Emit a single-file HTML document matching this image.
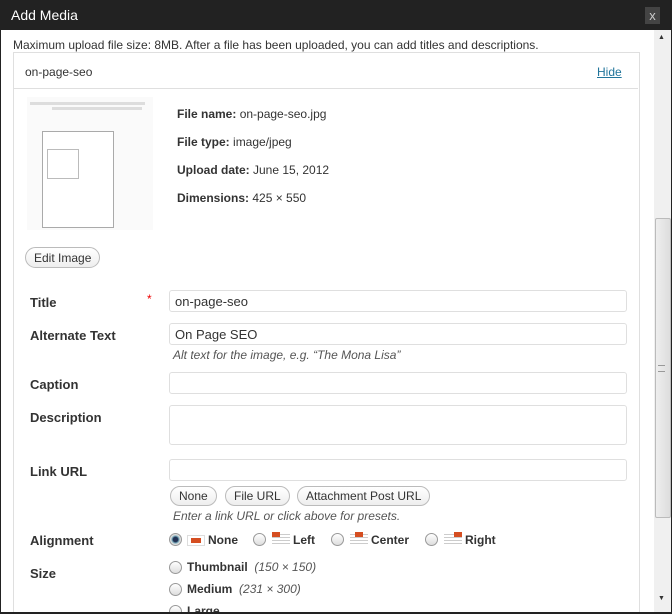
<!DOCTYPE html><html><head><style>
html,body{margin:0;width:672px;height:614px;overflow:hidden}
body{background:#222;font-family:"Liberation Sans",Arial,sans-serif;font-size:12px;color:#333;position:relative}
.a{position:absolute}
#tb{left:0;top:0;width:672px;height:30px;background:#222;color:#fff;font-size:14px}
#main{left:1px;top:30px;width:653px;height:582px;background:#fff;overflow:hidden}
#sb{left:654px;top:30px;width:17px;height:582px;background:#f0f0f0;overflow:hidden}
.lbl{position:absolute;left:29px;font-weight:bold;font-size:13px;color:#333}
.inp{position:absolute;left:168px;width:458px;height:22px;border:1px solid #dfdfdf;border-radius:3px;background:#fff;box-sizing:border-box;font-size:13px;padding:3px 5px;color:#333}
.btn{position:absolute;height:20px;border:1px solid #bbb;border-radius:11px;background:linear-gradient(#fff,#eee);box-sizing:border-box;font-size:12px;padding:2px 8px;color:#333}
.help{position:absolute;left:172px;font-style:italic;color:#555;font-size:12px}
.rad{position:absolute;width:11px;height:11px;border:1px solid #999;border-radius:50%;background:linear-gradient(#fff,#ddd)}
.b{font-weight:bold}
</style></head><body>
<div class="a" id="tb"><span class="a" style="left:11px;top:7px">Add Media</span><span class="a" style="left:645px;top:7px;width:15px;height:17px;background:#444;color:#ccc;text-align:center;font-size:13px;line-height:17px">x</span></div>
<div class="a" id="main">
<div class="a" style="left:12px;top:8px;font-size:12px">Maximum upload file size: 8MB. After a file has been uploaded, you can add titles and descriptions.</div>
<div class="a" style="left:12px;top:22px;width:625px;height:600px;border:1px solid #dfdfdf"></div>
<div class="a" style="left:13px;top:58px;width:624px;height:1px;background:#dfdfdf"></div>
<div class="a" style="left:24px;top:35px;font-size:12px">on-page-seo</div>
<div class="a" style="left:596px;top:35px;color:#21759b;text-decoration:underline">Hide</div>
<div class="a" style="left:26px;top:67px;width:126px;height:133px;background:#fafafa">
<div class="a" style="left:15px;top:34px;width:70px;height:95px;border:1px solid #aaa;background:#fff"></div>
<div class="a" style="left:3px;top:5px;width:115px;height:3px;background:#ddd"></div>
<div class="a" style="left:25px;top:10px;width:90px;height:3px;background:#ddd"></div>
<div class="a" style="left:20px;top:52px;width:30px;height:28px;border:1px solid #bbb"></div>
</div>
<div class="a" style="left:176px;top:70px;line-height:28px;font-size:12px"><span class="b">File name:</span> on-page-seo.jpg<br><span class="b">File type:</span> image/jpeg<br><span class="b">Upload date:</span> June 15, 2012<br><span class="b">Dimensions:</span> 425 × 550</div>
<div class="btn" style="left:24px;top:217px;height:21px;padding:3px 8px">Edit Image</div>
<div class="lbl" style="top:265px">Title</div><div class="a" style="left:146px;top:262px;color:#e00">*</div>
<div class="inp" style="top:260px">on-page-seo</div>
<div class="lbl" style="top:298px">Alternate Text</div>
<div class="inp" style="top:293px">On Page SEO</div>
<div class="help" style="top:318px">Alt text for the image, e.g. “The Mona Lisa”</div>
<div class="lbl" style="top:347px">Caption</div>
<div class="inp" style="top:342px"></div>
<div class="lbl" style="top:380px">Description</div>
<div class="inp" style="top:375px;height:40px"></div>
<div class="lbl" style="top:434px">Link URL</div>
<div class="inp" style="top:429px"></div>
<div class="btn" style="left:169px;top:456px">None</div>
<div class="btn" style="left:224px;top:456px">File URL</div>
<div class="btn" style="left:296px;top:456px">Attachment Post URL</div>
<div class="help" style="top:479px">Enter a link URL or click above for presets.</div>
<div class="lbl" style="top:503px">Alignment</div>
<div class="rad" style="left:168px;top:503px;background:radial-gradient(#235 30%,#7ab 45%,#ddd 60%)"></div>
<div class="a" style="left:186px;top:505px;width:16px;height:9px;border:1px solid #ddd;background:#fff"><div class="a" style="left:3px;top:2px;width:10px;height:5px;background:#d54e21"></div></div>
<div class="a b" style="left:207px;top:503px;font-size:12px">None</div>
<div class="rad" style="left:252px;top:503px"></div>
<div class="a" style="left:271px;top:502px;width:18px;height:12px;background:repeating-linear-gradient(#fff 0 2px,#ccc 2px 3px)"><div class="a" style="left:0;top:0;width:8px;height:5px;background:#d54e21"></div></div>
<div class="a b" style="left:292px;top:503px">Left</div>
<div class="rad" style="left:330px;top:503px"></div>
<div class="a" style="left:349px;top:502px;width:18px;height:12px;background:repeating-linear-gradient(#fff 0 2px,#ccc 2px 3px)"><div class="a" style="left:5px;top:0;width:8px;height:5px;background:#d54e21"></div></div>
<div class="a b" style="left:370px;top:503px">Center</div>
<div class="rad" style="left:424px;top:503px"></div>
<div class="a" style="left:443px;top:502px;width:18px;height:12px;background:repeating-linear-gradient(#fff 0 2px,#ccc 2px 3px)"><div class="a" style="left:10px;top:0;width:8px;height:5px;background:#d54e21"></div></div>
<div class="a b" style="left:464px;top:503px">Right</div>
<div class="lbl" style="top:536px">Size</div>
<div class="rad" style="left:168px;top:531px"></div>
<div class="a" style="left:186px;top:530px"><span class="b">Thumbnail</span> <i style="color:#555">&nbsp;(150 × 150)</i></div>
<div class="rad" style="left:168px;top:553px"></div>
<div class="a" style="left:186px;top:552px"><span class="b">Medium</span> <i style="color:#555">&nbsp;(231 × 300)</i></div>
<div class="rad" style="left:168px;top:575px"></div>
<div class="a b" style="left:186px;top:574px">Large</div>
</div>
<div class="a" id="sb"><div class="a" style="left:4px;top:4px;font-size:7px;color:#333">▲</div><div class="a" style="left:1px;top:188px;width:14px;height:298px;background:linear-gradient(90deg,#eee,#ddd);border:1px solid #bbb;border-radius:2px"></div><div class="a" style="left:4px;top:335px;width:7px;height:5px;border-top:1px solid #999;border-bottom:1px solid #999"></div><div class="a" style="left:4px;top:565px;font-size:7px;color:#333">▼</div></div>
</body></html>
